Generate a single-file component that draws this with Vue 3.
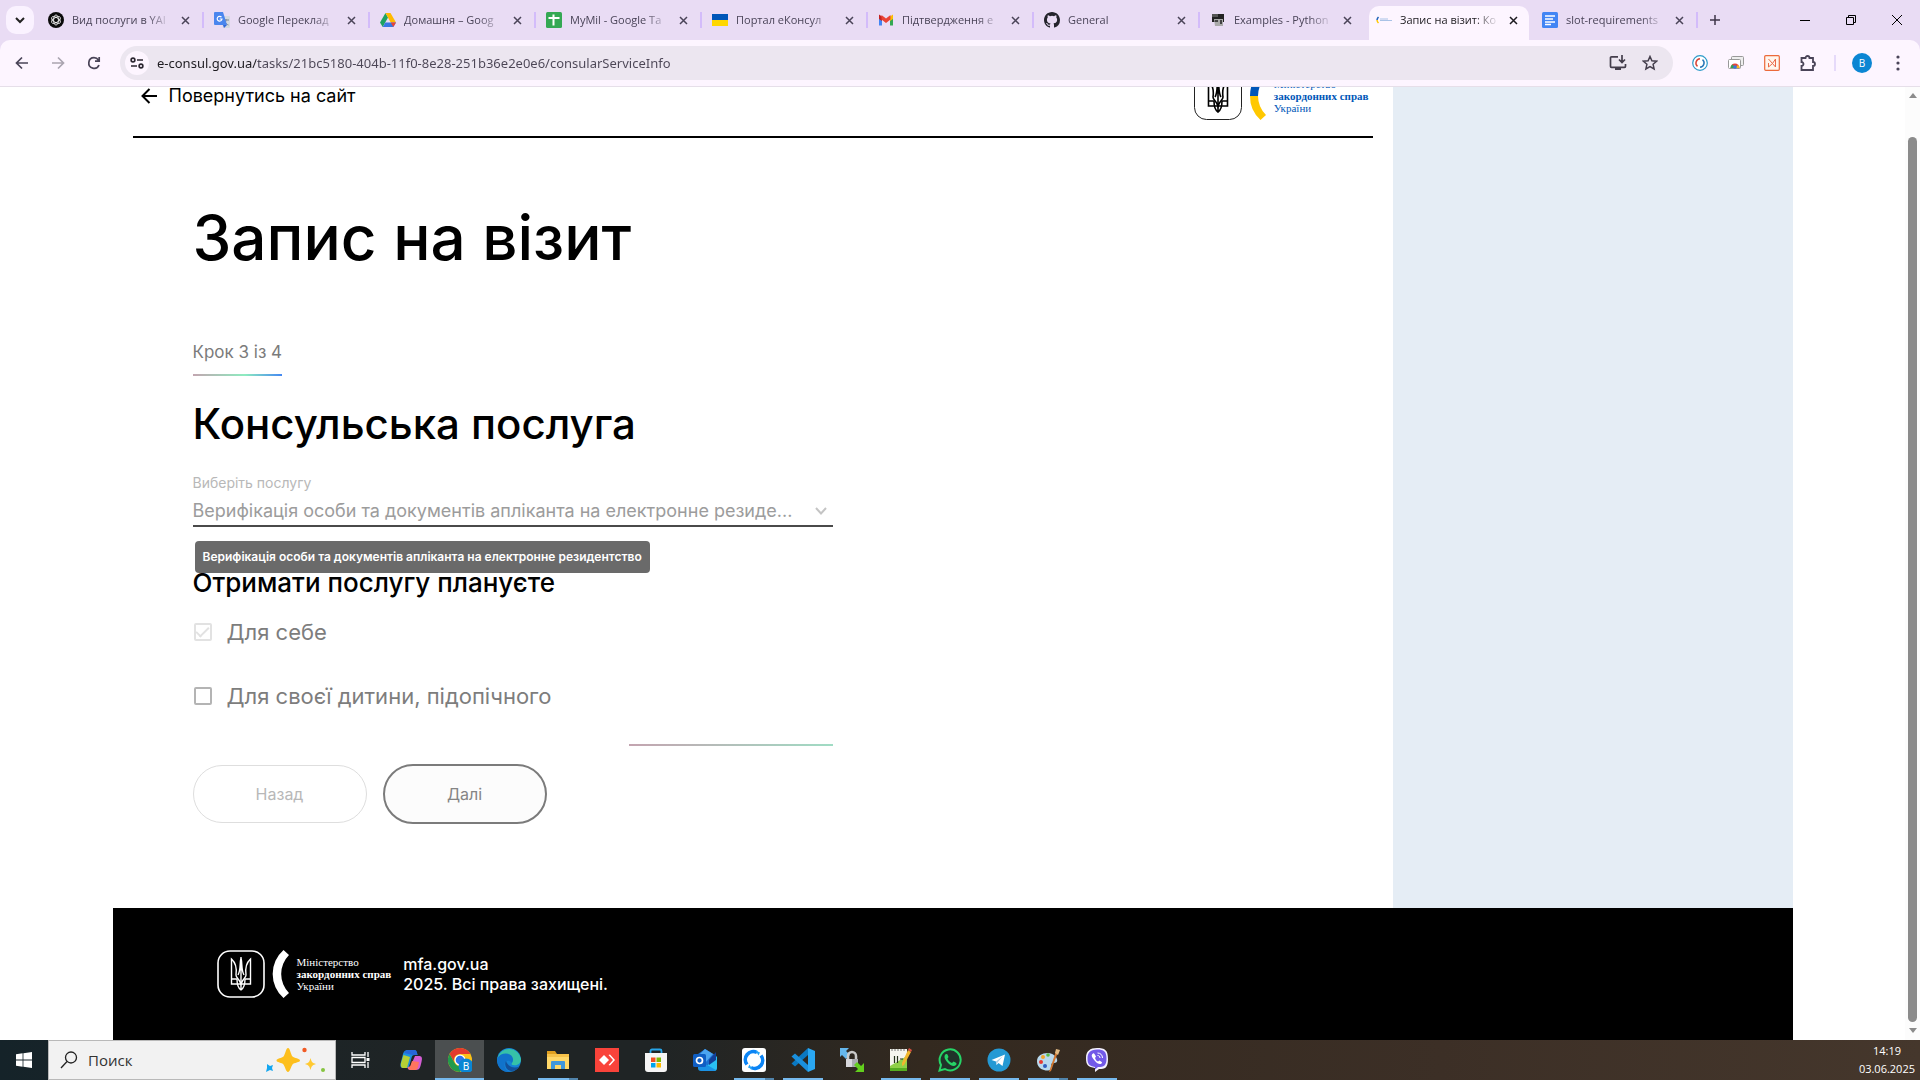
<script setup>
import { ref } from 'vue'

const close = 'M1 1l7 7M8 1l-7 7'

const tabs = [
  { title: 'Вид послуги в YAI', icon: '<circle cx="8" cy="8" r="8" fill="#0b0b0b"/><g fill="none" stroke="#fff" stroke-width=".8"><ellipse cx="8" cy="8" rx="2.400" ry="5"/><ellipse cx="8" cy="8" rx="2.400" ry="5" transform="rotate(60 8 8)"/><ellipse cx="8" cy="8" rx="2.400" ry="5" transform="rotate(120 8 8)"/></g>' },
  { title: 'Google Переклад', icon: '<path d="M6 4h9a1 1 0 011 1v10a1 1 0 01-1 1H9z" fill="#d5d9e0"/><path d="M9 8h6M12 7v1c0 2-1.500 4-3 5M10 9c1 2 3 3.500 4.500 4" stroke="#7c8794" fill="none"/><path d="M1 0h8l4 13H1a1 1 0 01-1-1V1a1 1 0 011-1z" fill="#4a86ee"/><path d="M9 13h4l-3 3z" fill="#3367d6"/><path d="M7.500 5.200A2.400 2.400 0 108 7H5.700" fill="none" stroke="#fff" stroke-width="1.200"/>' },
  { title: 'Домашня – Goog', icon: '<path d="M5.500 1L0 10.500 2.700 15 8 5.500z" fill="#1ea362"/><path d="M5.500 1h5L16 10.500h-5.300z" fill="#ffba00"/><path d="M2.700 15L5.300 10.500H16L13.300 15z" fill="#3777e3"/><path d="M10.700 10.500H16L13.300 15z" fill="#ea4335"/>' },
  { title: 'MyMil - Google Та', icon: '<rect width="16" height="16" rx="1.500" fill="#34a853"/><path d="M7.500 2.500v11M2.500 6h11" stroke="#fff" stroke-width="2"/>' },
  { title: 'Портал еКонсул', icon: '<path d="M0 2h16v6H0z" fill="#0057b8"/><path d="M0 8h16v6H0z" fill="#ffd700"/>' },
  { title: 'Підтвердження е', icon: '<path d="M1 4v9.500h3V7z" fill="#4285f4"/><path d="M15 4v9.500h-3V7z" fill="#34a853"/><path d="M12 4.500l3-2V7l-3 2z" fill="#fbbc04"/><path d="M1 2.500l3 2V9L1 7z" fill="#c5221f"/><path d="M3.500 3L8 6.500 12.500 3v4.500L8 11 3.500 7.500z" fill="#ea4335"/>' },
  { title: 'General', icon: '<path fill="#24242c" d="M8 0C3.580 0 0 3.580 0 8c0 3.540 2.290 6.530 5.470 7.590.4.070.550-.170.550-.380 0-.190-.010-.820-.010-1.490-2.010.370-2.530-.490-2.690-.940-.090-.230-.480-.940-.820-1.130-.280-.150-.680-.520-.010-.530.630-.010 1.080.580 1.230.820.720 1.210 1.870.870 2.330.660.070-.520.280-.870.510-1.070-1.780-.200-3.640-.890-3.640-3.950 0-.870.310-1.590.820-2.150-.080-.200-.360-1.020.080-2.120 0 0 .670-.210 2.200.820a7.400 7.400 0 014 0c1.530-1.040 2.200-.820 2.200-.820.440 1.100.160 1.920.080 2.120.510.560.820 1.270.820 2.150 0 3.070-1.870 3.750-3.650 3.950.290.250.540.730.540 1.480 0 1.070-.010 1.930-.010 2.200 0 .210.150.460.550.380A8 8 0 0016 8c0-4.420-3.580-8-8-8z"/>' },
  { title: 'Examples - Python', icon: '<path d="M2 2h12v8H2z" fill="#222"/><path d="M2 2h6v3H2z" fill="#555"/><path d="M4 7h9v7H5z" fill="#aaa"/><path d="M5 8h3v2H5zM10 8h2v4h-2z" fill="#444"/>' },
  { title: 'Запис на візит: Ко', active: true, icon: '<path d="M2.500 5A5 5 0 001 8" stroke="#1e62b8" stroke-width="1.500" fill="none"/><path d="M1 8a5 5 0 001.500 3" stroke="#ffc800" stroke-width="1.500" fill="none"/><path d="M4 7h8M4 8.500h12" stroke="#a9c2e6"/>' },
  { title: 'slot-requirements', icon: '<rect width="16" height="16" rx="1.500" fill="#4285f4"/><path d="M3 4h10M3 7h8M3 10h10M3 12.500h6" stroke="#fff" stroke-width="1.400"/>' },
]

const url = ref('e-consul.gov.ua/tasks/21bc5180-404b-11f0-8e28-251b36e2e0e6/consularServiceInfo')
const service = 'Верифікація особи та документів апліканта на електронне резидентство'
const forSelf = ref(true)
const forChild = ref(false)

const apps = [
  { name: 'Task View', icon: '<path d="M4 4v3h13V4M4 20v-3h13v3M4 9.500h13v5H4zM20 4v5M20 14v6" fill="none" stroke="#fff" stroke-width="1.300"/><path d="M18.500 10h3v3h-3z" fill="#fff"/>' },
  { name: 'Copilot', icon: '<path d="M9 2h6c2 0 2.500 1 3 3l.5 2h-3c-2 0-2.500 1-3 3l-2 7c-.5 2-1 3-3 3H4c-3 0-3-3-2-6l2-8c1-3 2-4 5-4z" fill="#1c8fe0"/><path d="M4.500 7L2 15c-.5 3 0 5 2.500 5H8l3-11z" fill="#b5cf35"/><path d="M5 5c1-2 2-3 5-3h5c2 0 2.500 1 3 3l.5 2h-5z" fill="#2666d8"/><path d="M16 8h4c3 0 3.500 2 2.500 6l-1 4c-1 3-2 4-5 4h-5c-2 0-3-1-3-3h1c2 0 2.500-1 3-3z" fill="#d45ed4"/><path d="M9 19c2 0 2.500-1 3-3l1-3 7 1-1 5c-.5 2-1.500 3-3 3h-4c-2 0-2.500-1-3-3z" fill="#ff755e"/>' },
  { name: 'Chrome', active: true, icon: '<circle cx="12" cy="12" r="12" fill="#fbc116"/><path d="M1.600 6A12 12 0 0122.400 6H12a6 6 0 00-5.500 8.500z" fill="#e33b2e"/><path d="M1.600 6A12 12 0 0012 24l5-8.500a6 6 0 01-10.300-.5z" fill="#229a4c"/><circle cx="12" cy="12" r="5.500" fill="#fff"/><circle cx="12" cy="12" r="4.300" fill="#2f76e8"/><circle cx="18" cy="18" r="7.500" fill="#0b86d3"/><text x="18" y="21.500" font-size="10" text-anchor="middle" fill="#fff" font-family="Noto Sans, sans-serif">B</text>' },
  { name: 'Edge', icon: '<circle cx="12" cy="12" r="12" fill="#1583d6"/><path d="M.5 10A12 12 0 0124 11c0 5-4 7-8 6-2-.5-1.500-1.500-.5-3C17 10 13 7 9 7 5 7 2 8.500.5 10z" fill="#36c2a8"/><path d="M.5 10C4 4 15 4 16 11c.3 1.500-1 3-1 4-3-4-8-2-7.500 3 .5 3 2.500 5 5.500 6C5 25-1 18 .5 10z" fill="#1173cb"/><path d="M9 13c-2 4 0 9 5 10 4 0 7-2 8.500-4.500C17 21 11 19 9 13z" fill="#13519b"/>' },
  { name: 'Explorer', open: true, stacked: true, icon: '<path d="M1 3h8l2 3H1z" fill="#e0a020"/><path d="M1 6h22v15H1z" fill="#ffd869"/><path d="M1 6h22v3H1z" fill="#f6c24a"/><path d="M5 21v-7a1 1 0 011-1h12a1 1 0 011 1v7h-4v-4H9v4z" fill="#3f97dd"/>' },
  { name: 'AnyDesk', icon: '<path d="M0 0h24v24H0z" fill="#f9433a"/><path d="M9 7l5 5-5 5-5-5z" fill="#fff"/><path d="M13.500 7l1.500-.5 5 5.500-5 5.500-1.500-.5 4.500-5z" fill="#fff"/>' },
  { name: 'Store', icon: '<path d="M6.500 6V3a1.500 1.500 0 011.500-1.500h8A1.500 1.500 0 0117.500 3v3" fill="none" stroke="#27a6ea" stroke-width="1.800"/><path d="M1 5h22v16a3 3 0 01-3 3H4a3 3 0 01-3-3z" fill="#f5f5f5"/><path d="M7 9.500h4.500V14H7z" fill="#f25022"/><path d="M12.500 9.500H17V14h-4.500z" fill="#7fba00"/><path d="M7 15h4.500v4.500H7z" fill="#00a4ef"/><path d="M12.500 15H17v4.500h-4.500z" fill="#ffb900"/>' },
  { name: 'Outlook', icon: '<path d="M12 1l10 6v13H5V6z" fill="#1a6fd0"/><path d="M12 1l8 5-8 9-5-9z" fill="#4ba5f0"/><path d="M24 8v12a3 3 0 01-3 3H9z" fill="#2ac0f2"/><path d="M5 12l18 10a3 3 0 01-2 1H8a3 3 0 01-3-3z" fill="#1b92e4"/><path d="M16 12l7-8v8l-7 5z" fill="#123f98"/><rect y="6" width="13" height="13" rx="1.500" fill="#0f5ec3"/><circle cx="6.500" cy="12.500" r="3" fill="none" stroke="#fff" stroke-width="1.700"/>' },
  { name: 'RustDesk', open: true, stacked: true, icon: '<rect width="24" height="24" rx="3" fill="#fff"/><path d="M15 4.500A8 8 0 005 16.500M9 19.500A8 8 0 0019 7.500" fill="none" stroke="#0b84f5" stroke-width="3.600"/><path d="M13.500 2.500l3 5 1.500-3zM10.500 21.500l-3-5L6 19.500z" fill="#25a6f7"/>' },
  { name: 'VS Code', open: true, icon: '<path d="M17 0l7 3v18l-7 3z" fill="#2aa7f2"/><path d="M17 0v7L4 18.500l-3.500-3z" fill="#0a78c2"/><path d="M17 24v-7L4 5.500.5 8.500z" fill="#1a8fdc"/>' },
  { name: 'WinSCP', icon: '<path d="M0 0h9l-3 3 4 4-4 4-4-4-2 2z" fill="#65b7ec"/><path d="M8 12V8a4 4 0 018 0v4" fill="none" stroke="#c9c9c9" stroke-width="2.500"/><path d="M6 11h12v8H6z" fill="#d8d8dc"/><path d="M12 11h6v8h-6z" fill="#a9abb0"/><path d="M24 24h-9l3-3-4-4 3-3 4 4 3-3z" fill="#62cf1d"/>' },
  { name: 'Notepad++', open: true, icon: '<path d="M1 1h17v22H1z" fill="#f5f5ee"/><path d="M1 18L18 8v15H1z" fill="#8fd048"/><path d="M1 20h17v3H1z" fill="#56ad21"/><path d="M3 1v2M6 1v2M9 1v2M12 1v2M15 1v2" stroke="#777"/><path d="M5.500 8v7M8.500 8v7M11 11h3" stroke="#24301b" stroke-width="1.200"/><path d="M19 2l3 2-7 13-2 1v-3z" fill="#f1b62e"/><path d="M19 2l1-2 3 2-1 2z" fill="#d65140"/>' },
  { name: 'WhatsApp', open: true, icon: '<path d="M1.500 22.500L3 17A10.500 10.500 0 117 21z" fill="#20322a" stroke="#26d366" stroke-width="2"/><path d="M8 6c-3 2-1 6 2 9s6 4 8 2c1-1 .5-2-.5-2.500l-2-1-1.500 1.500c-2-.5-4-2.500-4.500-4.500L10.500 9l-1-2.500C9.200 6 8.500 5.800 8 6z" fill="#26d366"/>' },
  { name: 'Telegram', open: true, icon: '<circle cx="12" cy="12" r="11.500" fill="#2499d4"/><path d="M4.500 12L18 6.500 15.500 18l-4-3-2 2-.5-3.500z" fill="#fff"/><path d="M9 13.500L16 8l-5.500 6.500-1 2.500z" fill="#a8cce4"/>' },
  { name: 'Paint', open: true, stacked: true, icon: '<path d="M1 13C1 5 15 2 20 9c3 5 0 6-3 6-2 0-2 2-1 4 0 4-5 4-8 3-4-1-7-4-7-9z" fill="#b9d9ee"/><circle cx="5" cy="14" r="2" fill="#e9382f"/><circle cx="7" cy="9" r="2" fill="#f1a42d"/><circle cx="12" cy="7" r="1.800" fill="#59b947"/><circle cx="9" cy="18" r="2" fill="#315fc0"/><path d="M20 3l2 1-7 19-2 1z" fill="#d27832"/><path d="M19 5l1-4 4 1-2 5z" fill="#e1b983"/>' },
  { name: 'Viber', open: true, icon: '<path d="M12 0c8 0 11 2 11 11s-3 10-9 10l-4 3v-4C3 19 1 17 1 10S5 0 12 0z" fill="#f5f2ff"/><path d="M12 1.500c7 0 9.500 2 9.500 9S19 19 13 19l-3 2.500V19C4 18 2.500 16 2.500 10.500s2.500-9 9.500-9z" fill="#7259e8"/><path d="M8 5.500c-3 2 0 5 2 7.500s5 4 6.500 2.500c1-1 .5-1.500-.5-2l-1.500-1-1.500 1c-1.500-.5-2.500-2-3-3.500L11 8.500 9.500 6C9 5.300 8.500 5.200 8 5.500z" fill="#fff"/><path d="M12.500 5c3 0 5 2 5 5M12.500 7.500c1.500 0 2.500 1 2.500 2.500" fill="none" stroke="#fff"/>' },
]
</script>

<template>
  <div class="desktop">
    <header class="browser">
      <div class="tabstrip">
        <button class="tab-search" aria-label="Пошук вкладок">
          <svg width="10" height="7" viewBox="0 0 10 7"><path d="M1 1l4 4 4-4" fill="none" stroke="#222" stroke-width="2" /></svg>
        </button>
        <div v-for="(t, i) in tabs" :key="t.title" class="tab" :class="{ active: t.active, divided: !t.active && !tabs[i + 1]?.active }">
          <svg class="favicon" width="16" height="16" viewBox="0 0 16 16" v-html="t.icon"></svg>
          <span class="tab-title">{{ t.title }}</span>
          <button class="tab-close" aria-label="Закрити">
            <svg width="9" height="9" viewBox="0 0 9 9"><path :d="close" stroke="currentColor" stroke-width="1.500" /></svg>
          </button>
        </div>
        <button class="new-tab" aria-label="Нова вкладка">
          <svg width="12" height="12" viewBox="0 0 12 12"><path d="M6 1v10M1 6h10" stroke="#3e3548" stroke-width="1.500" /></svg>
        </button>
        <div class="window-controls">
          <button aria-label="Згорнути"><svg width="10" height="10" viewBox="0 0 10 10"><path d="M0 5.500h10" stroke="#000" /></svg></button>
          <button aria-label="Відновити"><svg width="10" height="10" viewBox="0 0 10 10"><path d="M.5 2.500h7v7h-7zM2.500 2.500v-2h7v7h-2" fill="none" stroke="#000" /></svg></button>
          <button aria-label="Закрити вікно"><svg width="10" height="10" viewBox="0 0 10 10"><path d="M0 0l10 10M10 0L0 10" stroke="#000" /></svg></button>
        </div>
      </div>

      <div class="toolbar">
        <div class="nav">
          <button aria-label="Назад"><svg width="16" height="16" viewBox="0 0 16 16"><path d="M14 8H3M8 2.500L2.500 8 8 13.500" fill="none" stroke="#4a4458" stroke-width="1.700" /></svg></button>
          <button aria-label="Вперед"><svg width="16" height="16" viewBox="0 0 16 16"><path d="M2 8h11M8 2.500L13.500 8 8 13.500" fill="none" stroke="#aaa4b0" stroke-width="1.700" /></svg></button>
          <button aria-label="Оновити"><svg width="16" height="16" viewBox="0 0 16 16"><path d="M13 10A5.300 5.300 0 118 2.700c2 0 3.500 1 4.800 2.800M13.200 2v4.200H9" fill="none" stroke="#4a4458" stroke-width="1.700" /></svg></button>
        </div>
        <div class="omnibox">
          <button class="site-info" aria-label="Відомості про сайт">
            <svg width="14" height="12" viewBox="0 0 14 12"><g fill="none" stroke="#2b2630" stroke-width="1.600"><circle cx="3" cy="3" r="1.900" /><path d="M7 3h6M1 9h6" /><circle cx="11" cy="9" r="1.900" /></g></svg>
          </button>
          <input v-model="url" class="url" type="text" aria-label="Адресний рядок" spellcheck="false" />
          <button aria-label="Установити"><svg width="18" height="16" viewBox="0 0 18 16"><path d="M9 1.800H2.500a1 1 0 00-1 1v8.500a1 1 0 001 1h13a1 1 0 001-1V9M13 0v7M10 4.500l3 3 3-3" fill="none" stroke="#443e4c" stroke-width="1.700" /><path d="M6 12h6v3H6z" fill="#443e4c" /></svg></button>
          <button aria-label="Закладка"><svg width="16" height="16" viewBox="0 0 16 16"><path d="M8 1.500l1.900 4.300 4.700.4-3.500 3.100 1 4.600L8 11.500l-4.100 2.400 1-4.600L1.400 6.200l4.700-.4z" fill="none" stroke="#443e4c" stroke-width="1.500" /></svg></button>
        </div>
        <div class="extensions">
          <button aria-label="Розширення 1"><svg width="16" height="16" viewBox="0 0 16 16"><circle cx="8" cy="8" r="7.300" fill="#fff" stroke="#2d9bc9" stroke-width="1.200" /><path d="M8 3.800a4.300 4.300 0 00-2.500 7.600" fill="none" stroke="#d9483b" stroke-width="1.500" /><path d="M8 12.200a4.300 4.300 0 002.500-7.600" fill="none" stroke="#2b78b8" stroke-width="1.500" /></svg></button>
          <button aria-label="Розширення 2"><svg width="16" height="16" viewBox="0 0 16 16"><rect x="3.500" y="1.500" width="12" height="9" rx="1" fill="#eee" stroke="#999" /><rect x=".5" y="4.500" width="12" height="9" rx="1" fill="#fff" stroke="#999" /><path d="M2.500 13a4.500 4.500 0 019 0z" fill="#e5453a" /><path d="M2.500 13a4.500 4.500 0 012-3.800L7 13z" fill="#2fa452" /><path d="M11.500 13a4.500 4.500 0 00-1.500-3L7 13z" fill="#f5bb1b" /><circle cx="7" cy="12" r="1.800" fill="#3975dd" /></svg></button>
          <button aria-label="Розширення 3"><svg width="16" height="16" viewBox="0 0 16 16"><rect x=".7" y=".7" width="14.600" height="14.600" rx="1" fill="#fff6ee" stroke="#ec6a3b" stroke-width="1.200" /><path d="M4.500 4l4 4.500-4 3.500V8M11.500 12V4L8.500 8.500z" fill="none" stroke="#ea6a48" stroke-width="1" /></svg></button>
          <button aria-label="Розширення"><svg width="18" height="18" viewBox="0 0 18 18"><path d="M2.500 4h4a2 2 0 014 0h3.500v4a2 2 0 010 4v4H2.500v-4a2 2 0 000-4z" fill="none" stroke="#4a4458" stroke-width="1.800" /></svg></button>
        </div>
        <button class="avatar" aria-label="Профіль">В</button>
        <button class="menu" aria-label="Меню"><svg width="4" height="16" viewBox="0 0 4 16" fill="#4a4458"><circle cx="2" cy="2" r="1.600" /><circle cx="2" cy="8" r="1.600" /><circle cx="2" cy="14" r="1.600" /></svg></button>
      </div>
    </header>

    <div class="viewport">
      <div class="site">
        <div class="columns">
          <main class="main">
            <div class="topbar">
              <a class="back" href="#">
                <svg width="16" height="16" viewBox="0 0 16 16"><path d="M16 8H1.500M8.500 1L1.500 8l7 7" fill="none" stroke="#000" stroke-width="2" /></svg>
                Повернутись на сайт
              </a>
              <div class="mfa">
                <svg class="mfa-mark" width="74" height="48" viewBox="0 0 74 48">
                  <rect x=".5" y=".5" width="47" height="47" rx="12" fill="#fff" stroke="#222" />
                  <g fill="none" stroke="#000" stroke-width="1.600"><path d="M14.500 9v25H33.500V9C29 13 28 18 29 25c0 3-3 3-5 9-2-6-5-6-5-9 1-7 0-12-4.500-16z" /><path d="M24 7v33M24 8c-1.500 6 0 12-3 17M24 8c1.500 6 0 12 3 17M15 29h5c0 6 1 9 4 11 3-2 4-5 4-11h5" /></g>
                  <path d="M66.500 0a32 32 0 00-10.500 24h8a27 27 0 018-19z" fill="#0057b8" />
                  <path d="M56 24a32 32 0 0010.500 24l5.500-5a27 27 0 01-8-19z" fill="#ffc800" />
                </svg>
                <p class="mfa-name">Міністерство<br /><b>закордонних справ</b><br />України</p>
              </div>
            </div>

            <form class="form" @submit.prevent>
              <h1>Запис на візит</h1>
              <p class="step">Крок 3 із 4</p>
              <h2>Консульська послуга</h2>
              <label class="select-label" for="service">Виберіть послугу</label>
              <div class="select-wrap">
                <select id="service" disabled>
                  <option>Верифікація особи та документів апліканта на електронне резиде...</option>
                </select>
                <svg class="chevron" width="12" height="8" viewBox="0 0 12 8"><path d="M1 1l5 5.500L11 1" fill="none" stroke="#c4c4c4" stroke-width="2" /></svg>
                <div class="tooltip" role="tooltip">{{ service }}</div>
              </div>
              <h3>Отримати послугу плануєте</h3>
              <label class="check"><input v-model="forSelf" type="checkbox" disabled />Для себе</label>
              <label class="check"><input v-model="forChild" type="checkbox" />Для своєї дитини, підопічного</label>
              <div class="progress"></div>
              <div class="actions">
                <button class="prev" type="button">Назад</button>
                <button class="next" type="submit">Далі</button>
              </div>
            </form>
          </main>
          <aside class="side"></aside>
        </div>

        <footer class="footer">
          <div class="mfa">
            <svg class="mfa-mark" width="74" height="48" viewBox="0 0 74 48">
              <rect x="1" y="1" width="46" height="46" rx="12" fill="none" stroke="#fff" stroke-width="1.600" />
              <g fill="none" stroke="#fff" stroke-width="1.400"><path d="M14.500 9v25H33.500V9C29 13 28 18 29 25c0 3-3 3-5 9-2-6-5-6-5-9 1-7 0-12-4.500-16z" /><path d="M24 7v33M24 8c-1.500 6 0 12-3 17M24 8c1.500 6 0 12 3 17M15 29h5c0 6 1 9 4 11 3-2 4-5 4-11h5" /></g>
              <path d="M66.500 0a32 32 0 000 48l5.500-5a27 27 0 010-38z" fill="#fff" />
            </svg>
            <p class="mfa-name">Міністерство<br /><b>закордонних справ</b><br />України</p>
          </div>
          <p class="rights"><a href="#">mfa.gov.ua</a><br />2025. Всі права захищені.</p>
        </footer>
      </div>
      <div class="scrollbar">
        <svg width="8" height="5" viewBox="0 0 8 5"><path d="M0 5l4-5 4 5z" fill="#8b8b8b" /></svg>
        <div class="thumb"></div>
        <svg width="8" height="5" viewBox="0 0 8 5"><path d="M0 0l4 5 4-5z" fill="#8b8b8b" /></svg>
      </div>
    </div>

    <nav class="taskbar">
      <button class="start" aria-label="Пуск"><svg width="16" height="16" viewBox="0 0 16 16" fill="#fff"><path d="M0 2.200l6.600-.9v6.300H0zM7.400 1.200L16 0v7.600H7.400zM0 8.400h6.600v6.300L0 13.800zM7.400 8.400H16V16l-8.600-1.200z" /></svg></button>
      <label class="search">
        <svg width="18" height="18" viewBox="0 0 18 18"><circle cx="11" cy="6.500" r="5.500" fill="none" stroke="#222" stroke-width="1.300" /><path d="M7 10.500L1 17" stroke="#222" stroke-width="1.300" /></svg>
        <input type="text" placeholder="Поиск" aria-label="Поиск" />
        <svg width="62" height="26" viewBox="0 0 62 26"><path d="M24 1c2 0 3 7 4.500 8.500S36 11.500 36 13.500s-6 2-7.500 4S26 25 24 25s-3-5.500-4.500-7.500-7-2-7-4 5.500-2.500 7-4S22 1 24 1z" fill="#fdbf1d" /><path d="M46.500 11c1 4 2 5 5.500 6-3.500 1-4.500 2-5.500 6-1-4-2-5-5.500-6 3.500-1 4.500-2 5.500-6z" fill="#ffc931" /><path d="M3 17l3 2 3-1-1 3 1 3-3-1-4 2 1-4z" fill="#13a6f0" /><circle cx="40.500" cy="3" r="2.200" fill="#f15a24" /><circle cx="59" cy="23" r="2" fill="#86c440" /></svg>
      </label>
      <div class="apps">
        <button v-for="a in apps" :key="a.name" class="app" :class="{ open: a.open, stacked: a.stacked, active: a.active }" :aria-label="a.name">
          <svg width="24" height="24" viewBox="0 0 24 24" v-html="a.icon"></svg>
        </button>
      </div>
      <div class="clock"><time>14:19</time><time>03.06.2025</time></div>
    </nav>
  </div>
</template>

<style>
body {
  margin: 0;
  background: #fff;
}
</style>

<style scoped>
.desktop {
  --system: "Open Sans", "Noto Sans", sans-serif;
  --site: Inter, "Liberation Sans", sans-serif;
  display: flex;
  flex-direction: column;
  height: 100vh;
  overflow: hidden;
  font-family: var(--site);
}
.desktop * {
  box-sizing: border-box;
}
button {
  display: flex;
  align-items: center;
  justify-content: center;
  flex: none;
  padding: 0;
  border: 0;
  background: none;
  font: inherit;
  color: inherit;
}
h1, h2, h3, p {
  margin: 0;
  font-weight: 500;
}
svg {
  flex: none;
  display: block;
}

.browser {
  flex: none;
  background: #e9dcf4;
  font-family: var(--system);
}
.tabstrip {
  display: flex;
  align-items: stretch;
  height: 40px;
  padding-left: 6px;
}
.tab-search {
  align-self: center;
  width: 28px;
  height: 28px;
  margin-right: 4px;
  border-radius: 10px;
  background: #faf2ff;
}
.tab {
  position: relative;
  display: flex;
  align-items: center;
  flex: 0 1 166px;
  min-width: 0;
  padding: 0 9px 0 10px;
  font-size: 11px;
  line-height: 16px;
  color: #4a4458;
}
.tab.divided::after {
  content: "";
  position: absolute;
  right: 0;
  top: 12px;
  width: 2px;
  height: 16px;
  background: #d3bcfa;
}
.tab.active {
  color: #1d1b20;
}
.tab.active::before {
  content: "";
  position: absolute;
  inset: 6px 3px 0;
  border-radius: 10px 10px 0 0;
  background: #fdf5ff;
}
.tab.active > * {
  position: relative;
}
.favicon {
  margin-right: 8px;
}
.tab-title {
  flex: 1;
  min-width: 0;
  white-space: nowrap;
  mask-image: linear-gradient(to right, #000 calc(100% - 24px), transparent);
}
.tab-close {
  width: 20px;
  height: 20px;
  margin-left: 4px;
}
.new-tab {
  width: 34px;
}
.window-controls {
  display: flex;
  margin-left: auto;
}
.window-controls button {
  width: 46px;
}

.toolbar {
  display: flex;
  align-items: center;
  height: 47px;
  padding: 0 12px 0 4px;
  border-bottom: 1px solid #e6dfe9;
  border-radius: 10px 10px 0 0;
  background: #fdf5ff;
}
.nav {
  display: flex;
  margin-right: 8px;
}
.nav button {
  width: 36px;
  height: 34px;
}
.omnibox {
  display: flex;
  align-items: center;
  flex: 1;
  height: 34px;
  padding: 0 7px 0 5px;
  border-radius: 17px;
  background: #ece6f0;
}
.omnibox button {
  width: 32px;
  height: 24px;
}
.omnibox .site-info {
  width: 24px;
  border-radius: 12px;
  background: #fdf5ff;
}
.url {
  flex: 1;
  min-width: 0;
  margin-left: 8px;
  padding: 0;
  border: 0;
  outline: 0;
  font: 13px/20px "Noto Sans", sans-serif;
  color: transparent;
  background: linear-gradient(to right, #1d1b20 99px, #4c4656 99px);
  background-clip: text;
}
.extensions {
  display: flex;
  margin: 0 8px 0 9px;
  padding-right: 8px;
  border-right: 2px solid #e6dafa;
}
.extensions button {
  width: 36px;
  height: 16px;
}
.avatar {
  width: 20px;
  height: 20px;
  margin: 0 16px 0 8px;
  border-radius: 10px;
  background: #0b86d3;
  font-size: 10px;
  color: #fff;
}
.menu {
  width: 20px;
}

.viewport {
  display: flex;
  flex: 1;
  min-height: 0;
  overflow: hidden;
}
.site {
  flex: 1;
  max-width: 1680px;
  min-width: 0;
  margin: -36px auto 0;
}
.columns {
  display: flex;
}
.main {
  flex: 1;
  min-width: 0;
  padding: 0 20px 84px;
}
.side {
  flex: none;
  width: 400px;
  background: #e5edf5;
}
.topbar {
  display: flex;
  justify-content: space-between;
  padding: 21px 4px 16px 8px;
  border-bottom: 2px solid #000;
}
.back {
  display: flex;
  align-items: center;
  gap: 12px;
  font-size: 18px;
  font-weight: 400;
  line-height: 24px;
  color: #000;
  text-decoration: none;
}
.mfa {
  display: flex;
  align-items: center;
  gap: 6px;
}
.mfa-name {
  font: 11px/12px "Liberation Serif", serif;
  color: #0057b8;
}
.form {
  max-width: 640px;
  margin-left: 60px;
  padding-top: 64px;
}
h1 {
  font-size: 62px;
  line-height: 72px;
}
.step {
  width: max-content;
  margin-top: 66px;
  padding-bottom: 10px;
  border-bottom: 2px solid;
  border-image: linear-gradient(to right, #c4a4b0, #8eecc0 58%, #4285f4) 1;
  font-size: 17px;
  font-weight: 400;
  line-height: 24px;
  color: #7b7b7b;
}
h2 {
  margin-top: 24px;
  font-size: 42px;
  line-height: 48px;
}
.select-label {
  display: block;
  margin-top: 27px;
  font-size: 14px;
  line-height: 16px;
  color: #b8b8b8;
}
.select-wrap {
  position: relative;
  margin-top: 6px;
}
select {
  display: block;
  width: 100%;
  height: 30px;
  padding: 0;
  border: 0;
  border-bottom: 2px solid #4a4a4a;
  border-radius: 0;
  appearance: none;
  background: none;
  font: 18px/28px var(--site);
  color: #9c9c9c;
  opacity: 1;
}
.chevron {
  position: absolute;
  right: 6px;
  top: 10px;
}
.tooltip {
  position: absolute;
  left: 2px;
  top: 44px;
  padding: 8px;
  border-radius: 4px;
  background: #6a6a6a;
  font-size: 12px;
  font-weight: 600;
  line-height: 16px;
  white-space: nowrap;
  color: #fff;
}
h3 {
  margin-top: 40px;
  font-size: 26px;
  line-height: 32px;
}
.check {
  display: flex;
  align-items: center;
  margin-top: 40px;
  font-size: 22px;
  line-height: 24px;
  color: #7d7d7d;
}
h3 + .check {
  margin-top: 21px;
}
.check input {
  display: grid;
  place-items: center;
  width: 18px;
  height: 18px;
  margin: 0 15px 0 1px;
  border: 2px solid #b4b4b4;
  border-radius: 2px;
  appearance: none;
  background: #fff;
}
.check input:checked {
  border-color: #e2e2e2;
}
.check input:checked::after {
  content: "";
  width: 11px;
  height: 5px;
  margin-bottom: 4px;
  border: solid #e2e2e2;
  border-width: 0 0 2px 2px;
  transform: rotate(-45deg);
}
.progress {
  width: 204px;
  height: 2px;
  margin: 36px 0 18px auto;
  background: linear-gradient(to right, #c4a4b0, #a0dcc4);
}
.actions {
  display: flex;
  align-items: center;
  gap: 16px;
}
.actions button {
  border-radius: 30px;
  font-size: 16px;
}
.prev {
  width: 174px;
  height: 58px;
  border: 1px solid #dedede;
  color: #b8b8b8;
}
.next {
  width: 164px;
  height: 60px;
  border: 2px solid #7b7b7b;
  background: #fcfcfc;
  color: #858585;
}
.footer {
  display: flex;
  align-items: center;
  gap: 12px;
  height: 132px;
  padding-left: 104px;
  background: #000;
}
.footer .mfa-name {
  color: #fff;
}
.rights {
  font-size: 16px;
  font-weight: 500;
  line-height: 20px;
  color: #fff;
}
.rights a {
  color: #fff;
  text-decoration: none;
}
.scrollbar {
  display: flex;
  flex-direction: column;
  align-items: center;
  flex: none;
  width: 15px;
  padding: 6px 0 7px;
  background: #fcfcfc;
}
.thumb {
  flex: 1;
  width: 9px;
  margin: 39px 0 6px;
  border-radius: 5px;
  background: #8b8b8b;
}

.taskbar {
  display: flex;
  flex: none;
  height: 40px;
  background: linear-gradient(to right, #152329, #1f2425 22%, #1f2425 34%, #33291f 48%, #3c2f26 75%, #45372c);
  font-family: var(--system);
}
.start {
  width: 48px;
}
.search {
  display: flex;
  align-items: center;
  width: 288px;
  padding: 0 9px 0 11px;
  border: 1px solid #b9b9b9;
  background: #f2f2f2;
}
.search input {
  flex: 1;
  min-width: 0;
  margin-left: 10px;
  padding: 0;
  border: 0;
  outline: 0;
  background: none;
  font: 15px/20px var(--system);
}
.search input::placeholder {
  color: #333;
}
.apps {
  display: flex;
}
.app {
  position: relative;
  width: 49px;
}
.app:first-child {
  width: 47px;
  margin-right: 3px;
}
.app.active {
  background: #4b4f50;
}
.app.open::after,
.app.active::after {
  content: "";
  position: absolute;
  left: 5px;
  right: 4px;
  bottom: 0;
  height: 2px;
  background: #76b9ed;
}
.app.active::after {
  left: 0;
  right: 0;
}
.app.stacked::after {
  background: linear-gradient(to right, #76b9ed 31px, #5184ab 31px);
}
.clock {
  display: flex;
  flex-direction: column;
  justify-content: center;
  margin-left: auto;
  padding-right: 5px;
  font-size: 11px;
  line-height: 18px;
  text-align: center;
  color: #fff;
}
</style>
